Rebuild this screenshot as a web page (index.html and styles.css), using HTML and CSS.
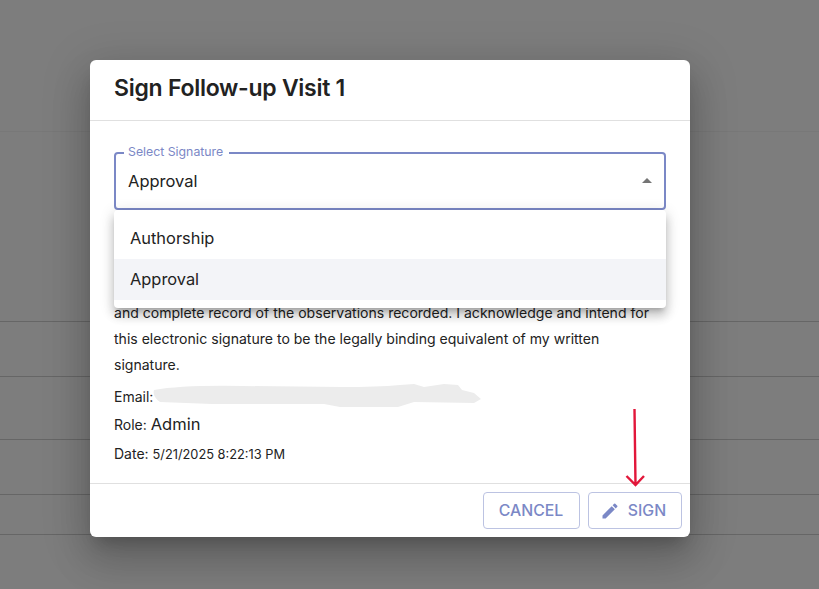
FILE: index.html
```html
<!DOCTYPE html>
<html lang="en">
<head>
    <meta charset="UTF-8">
    <meta name="viewport" content="width=device-width, initial-scale=1.0">
    <title>Sign Follow-up Visit 1</title>
    <link rel="stylesheet" href="styles.css">
</head>
<body>
    <!-- Table rows behind the backdrop -->
    <div class="backdrop">
        <div class="row row-head"></div>
        <div class="row row-1"></div>
        <div class="row row-2"></div>
        <div class="row row-3"></div>
        <div class="row row-4"></div>
        <div class="row row-5"></div>
    </div>

    <div class="dialog">
        <h2 class="dialog-title">Sign Follow-up Visit 1</h2>

        <div class="dialog-content">
            <div class="select">
                <span class="select-label">Select Signature</span>
                <span class="select-value">Approval</span>
                <span class="select-arrow"></span>
            </div>

            <ul class="menu">
                <li class="menu-item">Authorship</li>
                <li class="menu-item selected">Approval</li>
            </ul>

            <p class="statement">and complete record of the observations recorded. I acknowledge and intend for this electronic signature to be the legally binding equivalent of my written signature.</p>
            <div class="meta meta-email">
                <span>Email:</span>
                <svg class="redacted" width="330" height="26" viewBox="0 0 330 26">
                    <path d="M2 6 Q30 1 90 2 L190 3 Q225 3 248 1 L262 0 L272 3 L292 0 L306 1 L310 6 L322 9 L329 15 L322 19 L262 18 L246 23 L188 23 L172 20 L60 20 L8 18 Q0 12 2 6 Z" fill="#ececec"/>
                </svg>
            </div>
            <div class="meta meta-role">Role: <span class="meta-big">Admin</span></div>
            <div class="meta meta-date">Date: <span class="meta-small">5/21/2025 8:22:13 PM</span></div>
        </div>

        <div class="dialog-actions">
            <button class="btn">CANCEL</button>
            <button class="btn btn-sign">
                <svg width="20" height="20" viewBox="0 0 24 24"><path d="M3 17.25V21h3.75L17.81 9.94l-3.75-3.75L3 17.25zM20.71 7.04a1 1 0 0 0 0-1.41l-2.34-2.34a1 1 0 0 0-1.41 0l-1.83 1.83 3.75 3.75 1.83-1.83z" fill="#7b88c6"/></svg>
                SIGN
            </button>
        </div>
    </div>

    <!-- Red annotation arrow -->
    <svg class="annotation" width="24" height="84" viewBox="0 0 24 84">
        <path d="M11.5 2 L12.5 78 M3.5 69 L12.5 78 L21 69" fill="none" stroke="#e2173a" stroke-width="2.4"/>
    </svg>
</body>
</html>
```

FILE: styles.css
```css
body {
    font-family: Inter, "Liberation Sans", sans-serif;
    margin: 0;
    padding: 0;
    height: 589px;
    overflow: hidden;
    color: #222;
}
.backdrop {
    height: 589px;
    background-color: #7d7d7d;
}
.row {
    border-bottom: 1px solid #666;
}
.row-head {
    height: 131px;
    border-bottom-color: #787878;
}
.row-1 { height: 189px; }
.row-2 { height: 54px; }
.row-3 { height: 62px; }
.row-4 { height: 54px; }
.row-5 { height: 39px; }

.dialog {
    position: absolute;
    top: 60px;
    left: 90px;
    width: 600px;
    height: 477px;
    display: flex;
    flex-direction: column;
    background: #fff;
    border-radius: 6px;
    box-shadow: 0 11px 15px -7px rgba(0, 0, 0, 0.2), 0 24px 38px 3px rgba(0, 0, 0, 0.14), 0 9px 46px 8px rgba(0, 0, 0, 0.12);
}
.dialog-title {
    margin: 0;
    height: 61px;
    padding: 0 24px;
    box-sizing: border-box;
    border-bottom: 1px solid #e0e0e0;
    font-size: 23px;
    font-weight: 600;
    line-height: 56px;
    letter-spacing: -0.27px;
}
.dialog-content {
    position: relative;
    flex: 1;
    padding: 31px 24px 0;
}
.select {
    position: relative;
    height: 58px;
    box-sizing: border-box;
    border: 2px solid #7b88c6;
    border-radius: 4px;
    display: flex;
    align-items: center;
    padding: 0 12px;
}
.select-label {
    position: absolute;
    top: -9px;
    left: 8px;
    padding: 0 6px 0 4px;
    background: #fff;
    font-size: 12.3px;
    line-height: 14px;
    color: #7b88c6;
}
.select-value {
    font-size: 16.5px;
}
.select-arrow {
    position: absolute;
    right: 12px;
    top: 24px;
    border-left: 5px solid transparent;
    border-right: 5px solid transparent;
    border-bottom: 5px solid #757575;
}
.menu {
    position: absolute;
    top: 89px;
    left: 24px;
    right: 24px;
    z-index: 2;
    margin: 0;
    padding: 8px 0;
    list-style: none;
    background: #fff;
    border-radius: 4px;
    box-shadow: 0 5px 5px -3px rgba(0, 0, 0, 0.2), 0 8px 10px 1px rgba(0, 0, 0, 0.14), 0 3px 14px 2px rgba(0, 0, 0, 0.12);
}
.menu-item {
    height: 41px;
    line-height: 41px;
    padding: 0 16px;
    font-size: 16.4px;
}
.menu-item.selected {
    background: #f3f4f8;
}
.statement {
    margin: 90px 0 0;
    font-size: 14.05px;
    line-height: 26px;
}
.meta {
    font-size: 14px;
}
.meta-email {
    display: flex;
    align-items: center;
    height: 26px;
    margin-top: 5px;
}
.redacted {
    margin-left: -1px;
    margin-top: 1px;
}
.meta-role {
    margin-top: 2px;
    line-height: 26px;
}
.meta-big {
    font-size: 16.5px;
}
.meta-date {
    margin-top: 3px;
    line-height: 26px;
}
.meta-small {
    font-size: 12.8px;
}
.dialog-actions {
    height: 54px;
    box-sizing: border-box;
    border-top: 1px solid #e0e0e0;
    display: flex;
    justify-content: flex-end;
    gap: 8px;
    padding: 8px 8px 0;
}
.btn {
    height: 37px;
    width: 97px;
    display: flex;
    align-items: center;
    justify-content: center;
    gap: 8px;
    background: #fff;
    border: 1px solid #bcc3e2;
    border-radius: 4px;
    color: #7b88c6;
    font-family: inherit;
    font-size: 15.8px;
    font-weight: 500;
    padding: 0 1px 0 0;
}
.btn-sign {
    width: 94px;
    padding-right: 4px;
}
.annotation {
    position: absolute;
    top: 407px;
    left: 623px;
}
```
